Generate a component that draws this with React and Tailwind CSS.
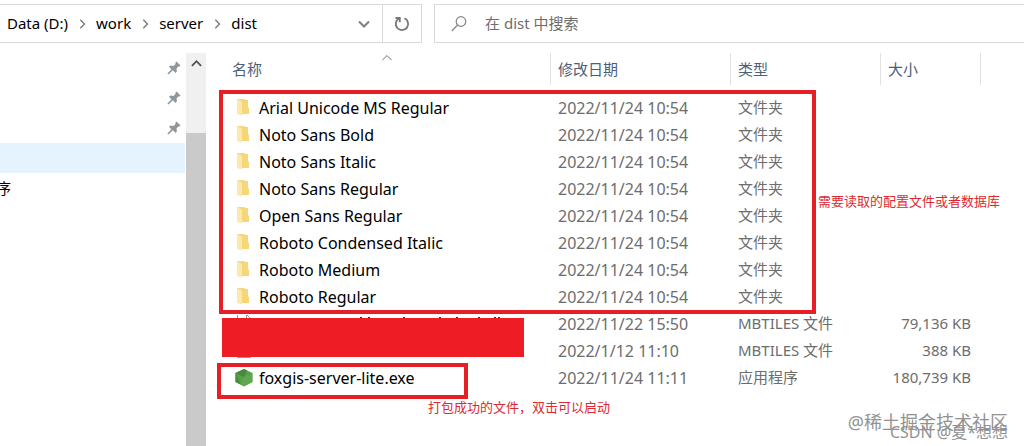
import React from "react";

const folders = [
  "Arial Unicode MS Regular",
  "Noto Sans Bold",
  "Noto Sans Italic",
  "Noto Sans Regular",
  "Open Sans Regular",
  "Roboto Condensed Italic",
  "Roboto Medium",
  "Roboto Regular",
];

const rows = [
  ...folders.map((name) => ({ icon: "folder", name, date: "2022/11/24 10:54", type: "文件夹", size: "" })),
  { icon: "file", name: "", date: "2022/11/22 15:50", type: "MBTILES 文件", size: "79,136 KB" },
  { icon: "file", name: "", date: "2022/1/12 11:10", type: "MBTILES 文件", size: "388 KB" },
  { icon: "node", name: "foxgis-server-lite.exe", date: "2022/11/24 11:11", type: "应用程序", size: "180,739 KB" },
];

const crumbs = ["Data (D:)", "work", "server", "dist"];

function Chevron({ className, d, width = 1.6 }) {
  return (
    <svg viewBox="0 0 12 12" className={className} fill="none" stroke="currentColor" strokeWidth={width} aria-hidden="true">
      <path d={d} />
    </svg>
  );
}

function RowIcon({ kind }) {
  if (kind === "folder") {
    return (
      <svg viewBox="0 0 18 18" className="size-[18px] shrink-0" aria-hidden="true">
        <path d="M2 0h8v15H2z" fill="#f2d78d" />
        <path d="M6 1h7v7l1 1v6H6z" fill="#f7d679" />
        <path d="M2 0l5 3v13.500l-2-.5-3-1z" fill="#fde8ac" />
      </svg>
    );
  }
  if (kind === "file") {
    return (
      <svg viewBox="0 0 18 18" className="size-[18px] shrink-0" fill="none" stroke="#9a9a9a" aria-hidden="true">
        <path d="M2.500 -.5h9l4 4v12h-13zM11.500 -.5v4h4" />
      </svg>
    );
  }
  return (
    <svg viewBox="0 0 18 18" className="size-[18px] shrink-0" aria-hidden="true">
      <path d="M9 0l8.500 4v9L9 17.500.5 13V4z" fill="#5a9f4c" />
      <path d="M9 0L.5 4v9l5 2.600L12 1.400z" fill="#48893e" />
      <path d="M.5 4l5 11.600L9 17.500l8.500-4.500V4L9 8z" fill="#62ad54" opacity=".6" />
    </svg>
  );
}

function Pin() {
  return (
    <svg viewBox="0 0 14 14" className="size-[14px]" fill="#8f979c" aria-hidden="true">
      <path d="M9.500 .5L13.500 4.500l-1 1-1.200-.1-1.800 2 .4 3.200-1.300 1.300-2.700-2.600L1.400 13.600l-1-1L4.400 8.300 2 5.800l1.300-1.200 3.200.3 2-1.900-.1-1.300z" />
    </svg>
  );
}

export default function App() {
  return (
    <div className="relative min-h-screen overflow-hidden bg-white pt-1 font-['Noto_Sans','Noto_Sans_CJK_SC',sans-serif] text-[15px] text-black">
      <header className="flex h-[39px] gap-3">
        <div className="flex w-[422px] shrink-0 border border-l-0 border-[#d9d9d9]">
          <nav aria-label="路径" className="flex flex-1 items-center pl-[7px]">
            {crumbs.map((c, i) => (
              <React.Fragment key={c}>
                {i > 0 && <Chevron className="mx-[9px] size-[10px] text-[#777]" d="M4 1l5 5-5 5" />}
                <a href="#">{c}</a>
              </React.Fragment>
            ))}
          </nav>
          <button aria-label="历史记录" className="px-3">
            <Chevron className="size-3 text-[#808080]" d="M1 3.500l5 5 5-5" width={2} />
          </button>
          <button aria-label="刷新" className="flex w-[39px] items-center justify-center border-l border-[#d9d9d9]">
            <svg viewBox="0 0 16 16" className="size-4" fill="none" stroke="#777" strokeWidth="1.800" aria-hidden="true">
              <path d="M10.500 2.300a6.200 6.200 0 1 1-5.500.2M1.500 2h4.300v4.300" />
            </svg>
          </button>
        </div>
        <label className="flex min-w-0 flex-1 items-center gap-[18px] border border-r-0 border-[#d9d9d9] pl-4">
          <svg viewBox="0 0 16 16" className="size-4 shrink-0" fill="none" stroke="#858585" strokeWidth="1.200" aria-hidden="true">
            <circle cx="10" cy="5.500" r="4.800" />
            <path d="M6.600 9L.8 15" />
          </svg>
          <input aria-label="搜索" placeholder="在 dist 中搜索" className="min-w-0 flex-1 outline-none placeholder:text-[#6d6d6d]" />
        </label>
      </header>

      <main className="mt-[10px] flex">
        <aside className="flex w-[206px] shrink-0">
          <div className="flex-1">
            {[0, 1, 2].map((i) => (
              <div key={i} className="flex h-[30px] items-center justify-end pr-1">
                <Pin />
              </div>
            ))}
            <div className="h-[30px] bg-[#e5f3ff]" />
            <div className="flex h-[30px] items-center overflow-hidden">
              <span className="-ml-1">序</span>
            </div>
          </div>
          <div className="ml-px flex min-h-[393px] w-5 flex-col bg-[#f0f0f0]">
            <button aria-label="向上滚动" className="flex h-5 items-center justify-center">
              <Chevron className="size-[11px] text-[#505050]" d="M1 8.500l5-5 5 5" width={2} />
            </button>
            <div className="mt-[60px] flex-1 bg-[#cacaca]" />
          </div>
        </aside>

        <section className="relative min-w-0 flex-1">
          <table className="w-[775px] table-fixed border-collapse text-left">
            <colgroup>
              <col className="w-[345px]" />
              <col className="w-[180px]" />
              <col className="w-[150px]" />
              <col className="w-[100px]" />
            </colgroup>
            <thead>
              <tr className="h-[41px] align-top text-[#4c607a]">
                {["名称", "修改日期", "类型", "大小"].map((h, i) => (
                  <th key={h} className="p-0 font-normal">
                    <div className={"flex h-8 items-center border-r border-[#e2e2e2] " + (i ? "pl-[7px]" : "pl-[26px]")}>{h}</div>
                  </th>
                ))}
              </tr>
            </thead>
            <tbody className="text-[#6d6d6d]">
              {rows.map((r, i) => (
                <tr key={i} className="h-[27px]">
                  <td className="p-0 pl-[29px]">
                    <div className="flex h-[27px] items-center gap-[6px] text-base text-black">
                      <RowIcon kind={r.icon} />
                      <span>{r.name}</span>
                    </div>
                  </td>
                  <td className="p-0 pl-[7px] text-base">{r.date}</td>
                  <td className="p-0 pl-[7px]">{r.type}</td>
                  <td className="p-0 pr-[10px] text-right whitespace-nowrap">{r.size}</td>
                </tr>
              ))}
            </tbody>
          </table>
          <Chevron className="absolute top-0 left-[176px] size-[10px] text-[#707070]" d="M0.500 8.500l5.500-5.500 5.500 5.500" width={1.200} />
          <svg viewBox="0 0 150 2" className="absolute top-[264px] left-[150px] h-[2px] w-[150px]" fill="#333" aria-hidden="true">
            <path d="M4 0h2v2H4zM12 0h2v2h-2zM47 0h2v2h-2zM83 0h2v2h-2zM100 0h2v2h-2zM122 0h2v2h-2zM138 0h2v2h-2zM142 0h2v2h-2z" />
          </svg>
          <div className="absolute top-[37px] left-[13px] h-[224px] w-[597px] border-4 border-[#e61e25]" />
          <div className="absolute top-[265px] left-[16px] h-[39px] w-[302px] bg-[#ee1c25]" />
          <div className="absolute top-[310px] left-[11px] h-[36px] w-[251px] border-4 border-[#e61e25]" />
          <p className="absolute top-[139px] left-[612px] text-[13px] whitespace-nowrap text-[#dc2a33]">需要读取的配置文件或者数据库</p>
          <p className="absolute top-[345px] left-[222px] text-[13px] whitespace-nowrap text-[#dc2a33]">打包成功的文件，双击可以启动</p>
        </section>
      </main>
      <p className="absolute right-4 bottom-3 text-lg leading-6 text-[#929292]">@稀土掘金技术社区</p>
      <p className="absolute right-4 bottom-1 text-base leading-5 text-[#929292]">CSDN @夏*想想</p>
    </div>
  );
}
